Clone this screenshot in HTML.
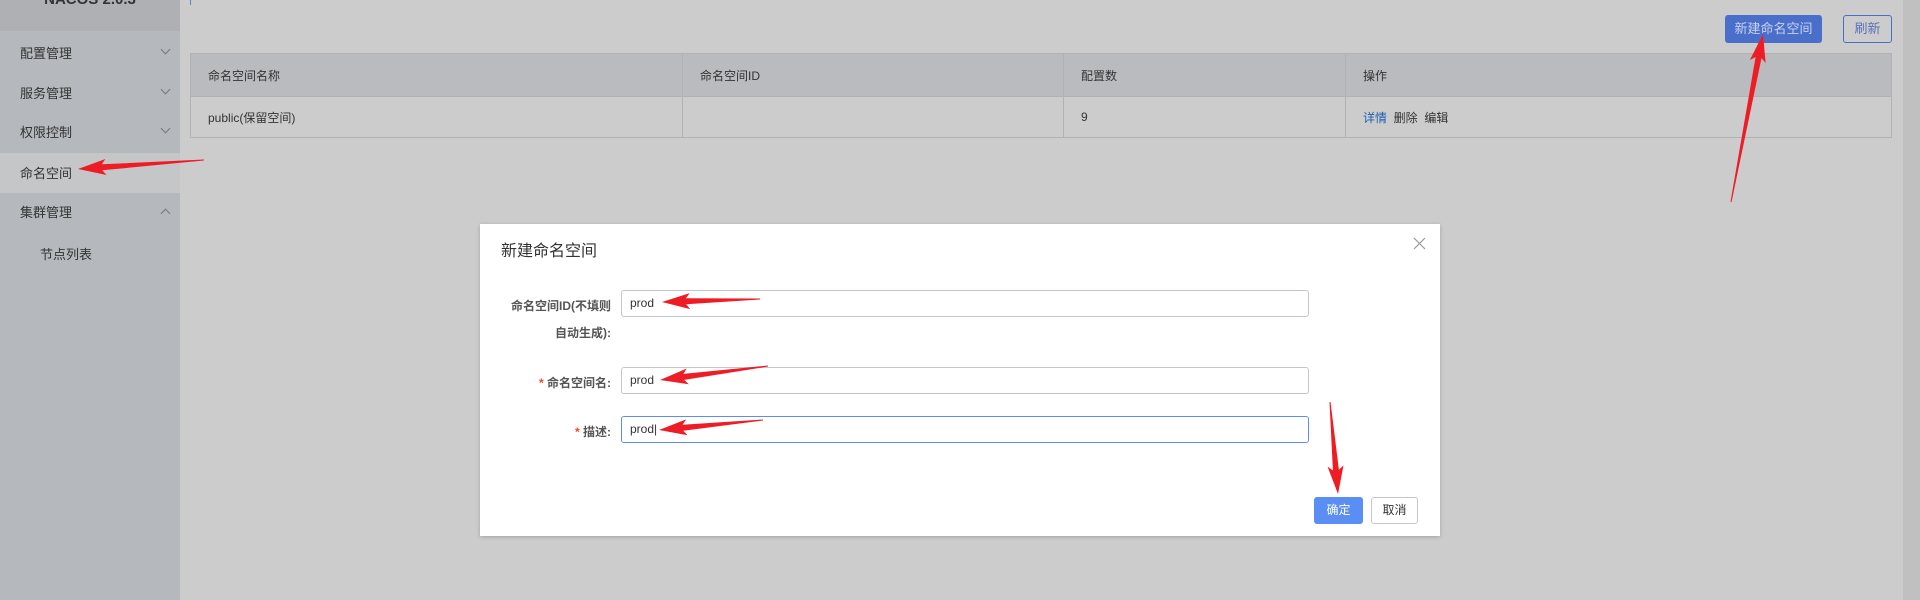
<!DOCTYPE html>
<html><head><meta charset="utf-8"><style>
*{box-sizing:border-box;margin:0;padding:0}
body{width:1920px;height:600px;overflow:hidden;background:#cccccc;font-family:"Liberation Sans","Noto Sans CJK SC",sans-serif;color:#333;position:relative}
.side{position:absolute;left:0;top:0;width:180px;height:600px;background:#b5b8bc}
.top{position:absolute;left:0;top:0;width:180px;height:31px;background:#aeb0b3;text-align:center;color:#333;font-weight:bold;font-size:15px}
.mi{position:absolute;left:20px;font-size:13px;color:#333;line-height:16px}
.chev{position:absolute;left:162px;width:7px;height:7px;border-right:1px solid #777;border-bottom:1px solid #777;transform:rotate(45deg)}
.hl{position:absolute;left:0;top:153px;width:180px;height:40px;background:#c5c6c8}
.scroll{position:absolute;left:1903px;top:0;width:17px;height:600px;background:#c0c0c0}
.btn1{position:absolute;left:1725px;top:15px;width:97px;height:28px;background:#4a6fcb;border-radius:3px;color:#c8d2ee;font-size:13px;text-align:center;line-height:28px}
.btn2{position:absolute;left:1843px;top:15px;width:49px;height:28px;border:1px solid #4a6fcb;border-radius:3px;color:#5a70b8;font-size:13px;text-align:center;line-height:26px}
table{position:absolute;left:190px;top:53px;width:1702px;border-collapse:collapse;font-size:12px}
td{border:1px solid #b0b2b5;padding-left:17px}
tr.h td{background:#babbbe;height:43px}
tr.r td{height:41px}
.dlg{position:absolute;left:480px;top:224px;width:960px;height:312px;background:#fff;box-shadow:0 1px 4px rgba(0,0,0,.2)}
.lab{position:absolute;font-size:12px;color:#555;text-align:right;font-weight:bold}
.inp{position:absolute;left:141px;width:688px;height:27px;border:1px solid #c4c6cf;border-radius:3px;font-size:12px;padding-left:8px;line-height:25px;color:#333}
.star{color:#f5462a}
</style></head><body>
<div class="side"></div>
<div class="top"><span style="position:relative;top:-9px">NACOS 2.0.3</span></div>
<div class="hl"></div>
<div class="mi" style="top:46px">配置管理</div><div class="chev" style="top:46px"></div>
<div class="mi" style="top:86px">服务管理</div><div class="chev" style="top:86px"></div>
<div class="mi" style="top:125px">权限控制</div><div class="chev" style="top:125px"></div>
<div class="mi" style="top:166px">命名空间</div>
<div class="mi" style="top:205px">集群管理</div>
<div class="chev" style="top:210px;transform:rotate(225deg)"></div>
<div class="mi" style="left:40px;top:247px">节点列表</div>
<div style="position:absolute;left:190px;top:0;width:1px;height:5px;background:#5a7fc8"></div>
<div class="scroll"></div>
<div class="btn1">新建命名空间</div>
<div class="btn2">刷新</div>
<table>
<tr class="h"><td style="width:492px">命名空间名称</td><td style="width:381px">命名空间ID</td><td style="width:282px">配置数</td><td>操作</td></tr>
<tr class="r"><td>public(保留空间)</td><td></td><td>9</td><td><span style="color:#1a5fb4">详情</span>&nbsp;&nbsp;删除&nbsp;&nbsp;编辑</td></tr>
</table>
<div class="dlg">
<div style="position:absolute;left:21px;top:13px;font-size:16px;color:#333">新建命名空间</div>
<svg style="position:absolute;left:933px;top:13px" width="13" height="13"><path d="M1 1L12 12M12 1L1 12" stroke="#999" stroke-width="1.2"/></svg>
<div class="lab" style="left:0;width:131px;top:73px">命名空间ID(不填则</div>
<div class="lab" style="left:0;width:131px;top:100px">自动生成):</div>
<div class="inp" style="top:66px">prod</div>
<div class="lab" style="left:0;width:131px;top:150px"><span class="star">*</span> 命名空间名:</div>
<div class="inp" style="top:143px">prod</div>
<div class="lab" style="left:0;width:131px;top:199px"><span class="star">*</span> 描述:</div>
<div class="inp" style="top:192px;border-color:#5b8ef5">prod|</div>
<div style="position:absolute;left:834px;top:273px;width:49px;height:27px;background:#5b8ef5;border-radius:3px;color:#fff;font-size:12px;text-align:center;line-height:27px">确定</div>
<div style="position:absolute;left:891px;top:273px;width:47px;height:27px;border:1px solid #c4c6cf;border-radius:3px;color:#333;font-size:12px;text-align:center;line-height:25px">取消</div>
</div>
<svg id="arr" width="1920" height="600" style="position:absolute;left:0;top:0"></svg>
<script>
var A=[[204,160,78,169],[1731,202,1763,34],[760,299,662,302],[768,366,660,380],[763,420,659,430],[1330,402,1338,494]];
var s='';
A.forEach(function(a){var dx=a[2]-a[0],dy=a[3]-a[1],L=Math.hypot(dx,dy),ux=dx/L,uy=dy/L,nx=-uy,ny=ux;
function p(t,w){return (a[0]+ux*t+nx*w).toFixed(1)+','+(a[1]+uy*t+ny*w).toFixed(1);}
var h=L-24;
s+='<polygon fill="#ee1c25" points="'+[p(0,0.5),p(h,3),p(h-4,8),p(L,0),p(h-4,-8),p(h,-3),p(0,-0.5)].join(' ')+'"/>';});
document.getElementById('arr').innerHTML=s;
</script>
</body></html>
